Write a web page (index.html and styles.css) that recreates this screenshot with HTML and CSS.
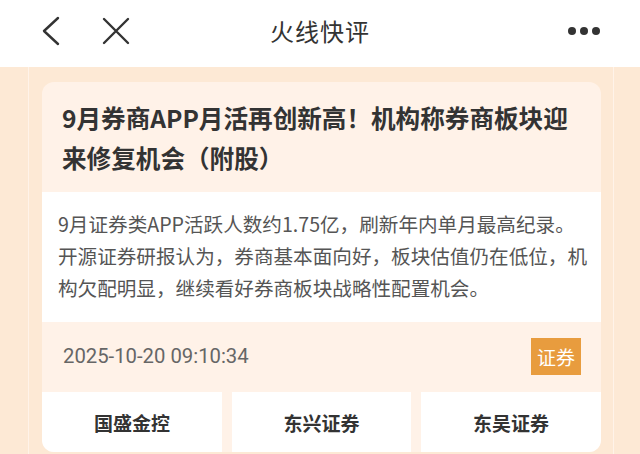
FILE: index.html
```html
<!DOCTYPE html>
<html lang="zh">
<head>
<meta charset="utf-8">
<link rel="stylesheet" href="styles.css">
</head>
<body>
<header class="topbar">
  <div class="nav-left">
    <svg class="icon" width="22" height="30" viewBox="0 0 22 30"><path d="M19 2 L5 15 L19 28" fill="none" stroke="#333" stroke-width="2.4" stroke-linecap="round" stroke-linejoin="round"/></svg>
    <svg class="icon" width="28" height="28" viewBox="0 0 28 28"><path d="M2 2 L26 26 M26 2 L2 26" fill="none" stroke="#333" stroke-width="2.4" stroke-linecap="round"/></svg>
  </div>
  <div class="nav-title">火线快评</div>
  <div class="nav-right">
    <span class="dot"></span><span class="dot"></span><span class="dot"></span>
  </div>
</header>
<main class="wrap">
  <article class="card">
    <h1 class="card-title">9月券商APP月活再创新高！机构称券商板块迎来修复机会（附股）</h1>
    <p class="card-summary">9月证券类APP活跃人数约1.75亿，刷新年内单月最高纪录。开源证券研报认为，券商基本面向好，板块估值仍在低位，机构欠配明显，继续看好券商板块战略性配置机会。</p>
    <div class="card-meta">
      <span class="date">2025-10-20 09:10:34</span>
      <span class="tag">证券</span>
    </div>
    <div class="stocks">
      <div class="stock">国盛金控</div>
      <div class="stock">东兴证券</div>
      <div class="stock">东吴证券</div>
    </div>
  </article>
</main>
</body>
</html>
```
FILE: styles.css
```css
html, body {
  margin: 0;
  padding: 0;
}
body {
  background: #fde9d5;
  font-family: "Noto Sans CJK SC", "Noto Sans", sans-serif;
  width: 640px;
  height: 454px;
  overflow: hidden;
}
.topbar {
  height: 67px;
  background: #ffffff;
  display: grid;
  grid-template-columns: 1fr auto 1fr;
  align-items: center;
}
.nav-left {
  display: flex;
  align-items: center;
  gap: 41px;
  padding-left: 39px;
  padding-bottom: 6px;
}
.icon {
  display: block;
}
.nav-title {
  font-size: 24px;
  color: #333;
  padding-bottom: 6px;
  letter-spacing: 1px;
}
.nav-right {
  display: flex;
  justify-content: flex-end;
  gap: 4px;
  padding-right: 40px;
  padding-bottom: 6px;
}
.dot {
  width: 8px;
  height: 8px;
  border-radius: 50%;
  background: #333;
}
.wrap {
  margin: 0 26px 0 28px;
  border-left: 1px solid #fff3e9;
  border-right: 1px solid #fff3e9;
  padding: 15px 12px 0 13px;
  height: 400px;
}
.card {
  background: #fff2e8;
  border-radius: 12px;
  overflow: hidden;
}
.card-title {
  margin: 0;
  padding: 15px 28px 15px 20px;
  font-size: 24.6px;
  line-height: 40px;
  font-weight: 700;
  color: #333;
}
.card-summary {
  margin: 0;
  background: #ffffff;
  padding: 16px 8px 18px 16px;
  font-size: 19.6px;
  line-height: 32px;
  color: #555;
}
.card-meta {
  height: 68px;
  display: flex;
  align-items: center;
  justify-content: space-between;
  padding: 0 20px 0 21px;
}
.date {
  font-family: Roboto, "Liberation Sans", sans-serif;
  font-size: 20.3px;
  color: #666;
}
.tag {
  background: #e89c3e;
  color: #ffffff;
  font-size: 19px;
  line-height: 37px;
  padding: 0 6px;
}
.stocks {
  display: grid;
  grid-template-columns: 180px 179px 180px;
  justify-content: space-between;
  padding-top: 2px;
}
.stock {
  background: #ffffff;
  height: 60px;
  display: flex;
  align-items: center;
  justify-content: center;
  font-size: 19px;
  font-weight: 700;
  color: #333;
}
```
